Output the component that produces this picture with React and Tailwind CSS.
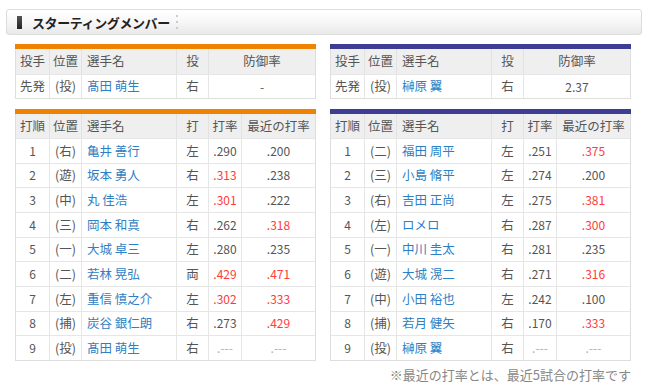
import React from "react";

const lineupL = [
  ["1", "右", "亀井 善行", "左", ".290", ".200", 0, 0],
  ["2", "遊", "坂本 勇人", "右", ".313", ".238", 1, 0],
  ["3", "中", "丸 佳浩", "左", ".301", ".222", 1, 0],
  ["4", "三", "岡本 和真", "右", ".262", ".318", 0, 1],
  ["5", "一", "大城 卓三", "左", ".280", ".235", 0, 0],
  ["6", "二", "若林 晃弘", "両", ".429", ".471", 1, 1],
  ["7", "左", "重信 慎之介", "左", ".302", ".333", 1, 1],
  ["8", "捕", "炭谷 銀仁朗", "右", ".273", ".429", 0, 1],
  ["9", "投", "髙田 萌生", "右", ".---", ".---", 2, 2],
];
const lineupR = [
  ["1", "二", "福田 周平", "左", ".251", ".375", 0, 1],
  ["2", "三", "小島 脩平", "左", ".274", ".200", 0, 0],
  ["3", "右", "吉田 正尚", "左", ".275", ".381", 0, 1],
  ["4", "左", "ロメロ", "右", ".287", ".300", 0, 1],
  ["5", "一", "中川 圭太", "右", ".281", ".235", 0, 0],
  ["6", "遊", "大城 滉二", "右", ".271", ".316", 0, 1],
  ["7", "中", "小田 裕也", "左", ".242", ".100", 0, 0],
  ["8", "捕", "若月 健矢", "右", ".170", ".333", 0, 1],
  ["9", "投", "榊原 翼", "右", ".---", ".---", 2, 2],
];

const numCls = (f) =>
  f === 1 ? "text-[#ff3b3b]" : f === 2 ? "text-[#b0b0b0] text-[11px]" : "text-[#555]";

function PitcherTable({ bar, name, era }) {
  return (
    <div className="w-[301px] border-x border-b border-[#dedede]">
      <div className={`h-[5px] -mx-px ${bar}`} />
      <div className="grid grid-cols-[33px_32px_95px_32px_1fr] h-[25px] bg-[#efefef] items-stretch">
        <div className="flex items-center justify-center">投手</div>
        <div className="flex items-center justify-center border-l border-[#e2e2e2]">位置</div>
        <div className="flex items-center pl-[5px] border-l border-[#e2e2e2]">選手名</div>
        <div className="flex items-center justify-center border-l border-[#e2e2e2]">投</div>
        <div className="flex items-center justify-center border-l border-[#e2e2e2]">防御率</div>
      </div>
      <div className="grid grid-cols-[33px_32px_95px_32px_1fr] h-[24px] bg-white border-t border-[#e6e6e6]">
        <div className="flex items-center justify-center">先発</div>
        <div className="flex items-center justify-center border-l border-[#e6e6e6]">(投)</div>
        <div className="flex items-center pl-[5px] border-l border-[#e6e6e6] text-[#2e7fc4]">{name}</div>
        <div className="flex items-center justify-center border-l border-[#e6e6e6]">右</div>
        <div className="flex items-center justify-center border-l border-[#e6e6e6] text-[12px]">{era}</div>
      </div>
    </div>
  );
}

function LineupTable({ bar, rows }) {
  const cols = "grid grid-cols-[33px_32px_95px_32px_33px_1fr]";
  return (
    <div className="w-[301px] border-x border-b border-[#dedede]">
      <div className={`h-[5px] -mx-px ${bar}`} />
      <div className={`${cols} h-[24px] bg-[#efefef]`}>
        <div className="flex items-center justify-center">打順</div>
        <div className="flex items-center justify-center border-l border-[#e2e2e2]">位置</div>
        <div className="flex items-center pl-[5px] border-l border-[#e2e2e2]">選手名</div>
        <div className="flex items-center justify-center border-l border-[#e2e2e2]">打</div>
        <div className="flex items-center justify-center border-l border-[#e2e2e2]">打率</div>
        <div className="flex items-center justify-center border-l border-[#e2e2e2]">最近の打率</div>
      </div>
      {rows.map((r) => (
        <div key={r[0]} className={`${cols} h-[24.67px] bg-white border-t border-[#e6e6e6]`}>
          <div className="flex items-center justify-center text-[12px]">{r[0]}</div>
          <div className="flex items-center justify-center border-l border-[#e6e6e6]">({r[1]})</div>
          <div className="flex items-center pl-[5px] border-l border-[#e6e6e6] text-[#2e7fc4] whitespace-nowrap">{r[2]}</div>
          <div className="flex items-center justify-center border-l border-[#e6e6e6]">{r[3]}</div>
          <div className={`flex items-center justify-center border-l border-[#e6e6e6] text-[12px] ${numCls(r[6])}`}>{r[4]}</div>
          <div className={`flex items-center justify-center border-l border-[#e6e6e6] text-[12px] ${numCls(r[7])}`}>{r[5]}</div>
        </div>
      ))}
    </div>
  );
}

export default function App() {
  return (
    <div
      className="w-[650px] h-[391px] bg-white overflow-hidden text-[12.5px] text-[#555] leading-none"
      style={{ fontFamily: '"Noto Sans CJK JP", "Noto Sans", sans-serif' }}
    >
      <div className="pt-[9px] pl-[6px]">
        <div className="w-[636px] h-[26px] border border-[#dcdcdc] rounded-[3px] bg-gradient-to-b from-white via-[#f7f7f7] to-[#e9e9e9] flex items-center">
          <div className="ml-[10px] w-[5px] h-[13px] bg-gradient-to-b from-[#555] to-[#222]" />
          <div className="ml-[10px] text-[13px] font-bold text-[#222] tracking-[-0.4px]">スターティングメンバー</div>
          <div className="ml-[6px] flex flex-col gap-[4px]">
            <div className="w-[2px] h-[2px] bg-[#ccc]" />
            <div className="w-[2px] h-[2px] bg-[#ccc]" />
            <div className="w-[2px] h-[2px] bg-[#ccc]" />
          </div>
        </div>
      </div>
      <div className="pl-[15px] pt-[9px] grid grid-cols-[301px_301px] gap-x-[14px]">
        <PitcherTable bar="bg-[#ef8200]" name="髙田 萌生" era="-" />
        <PitcherTable bar="bg-[#3e3d94]" name="榊原 翼" era="2.37" />
      </div>
      <div className="pl-[15px] pt-[10px] grid grid-cols-[301px_301px] gap-x-[14px]">
        <LineupTable bar="bg-[#ef8200]" rows={lineupL} />
        <LineupTable bar="bg-[#3e3d94]" rows={lineupR} />
      </div>
      <div className="w-[631px] text-right pt-[7px] text-[13px] text-[#888]">
        ※最近の打率とは、最近5試合の打率です
      </div>
    </div>
  );
}
